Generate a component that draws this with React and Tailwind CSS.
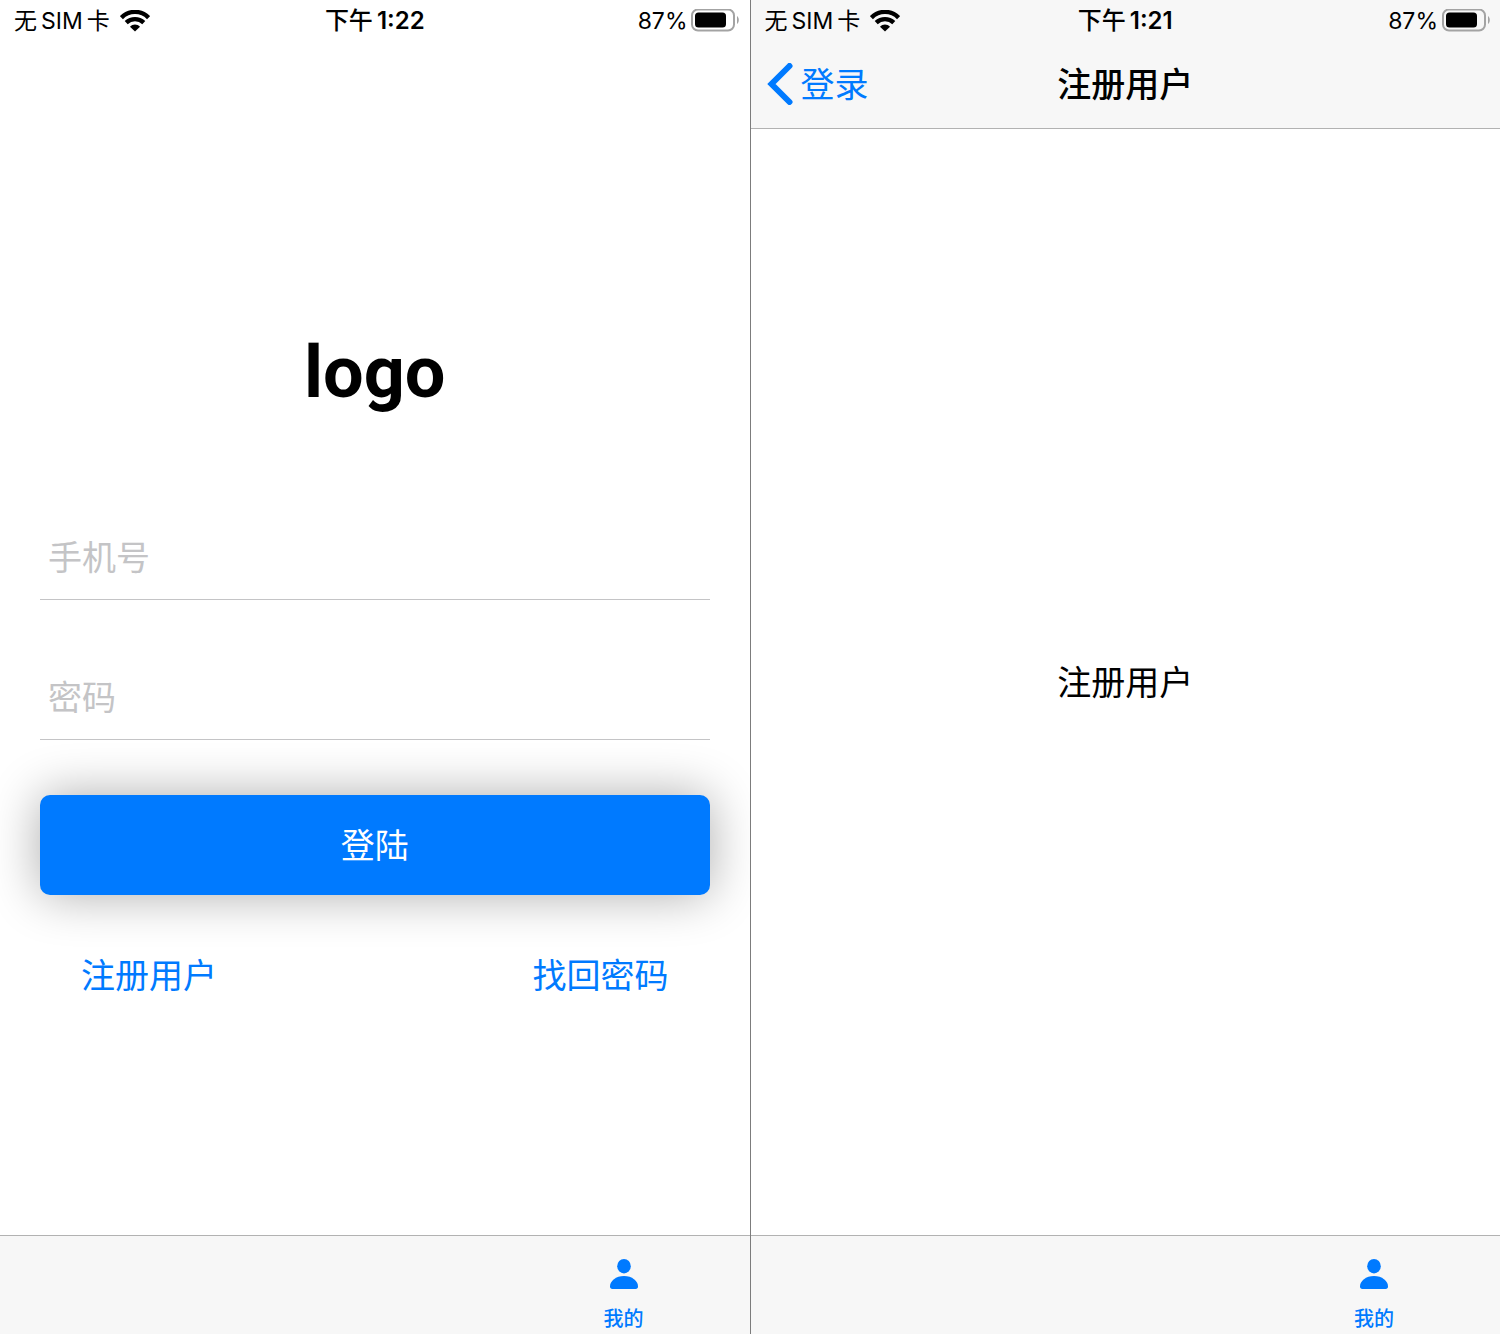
import React from "react";

const cjk = "font-['Inter','Noto_Sans_CJK_SC',sans-serif]";

function WifiIcon() {
  return (
    <svg viewBox="0 0 30 22" className="h-[22px] w-[30px]" fill="none" stroke="currentColor" aria-hidden="true">
      <path d="M1.4 7.6C9 0 21 0 28.6 7.6" strokeWidth="4.4" />
      <path d="M6.2 12.6C11.2 7.9 18.8 7.9 23.8 12.6" strokeWidth="4.4" />
      <path d="M10 16.8C12.8 13.8 17.2 13.8 20 16.8L15 21.6Z" fill="currentColor" stroke="none" />
    </svg>
  );
}

function BatteryIcon() {
  return (
    <svg viewBox="0 0 48 24" className="h-6 w-12" aria-hidden="true">
      <rect x="1" y="0.5" width="42" height="21" rx="6" fill="none" stroke="#a3a3a3" strokeWidth="2" />
      <rect x="4" y="3.5" width="31" height="15" rx="3.5" fill="currentColor" />
      <path d="M46 7C48.4 8.5 48.4 13.5 46 15Z" fill="#a3a3a3" />
    </svg>
  );
}

function StatusBar({ time }) {
  return (
    <div className="grid h-10 grid-cols-3 items-center pt-0.5 text-2xl text-black">
      <div className="flex items-center gap-2.5 pl-3.5 text-[23px] whitespace-nowrap">
        <span className="flex items-center gap-1">
          <span>无</span>
          <span>SIM</span>
          <span>卡</span>
        </span>
        <WifiIcon />
      </div>
      <div className="flex items-center justify-center gap-1 font-semibold whitespace-nowrap">
        <span className="font-medium">下午</span>
        <span>{time}</span>
      </div>
      <div className="flex items-center justify-end gap-1 pr-2.5 whitespace-nowrap">
        <span className="text-[23px]">87%</span>
        <BatteryIcon />
      </div>
    </div>
  );
}

function TabBar() {
  return (
    <nav className="grid h-[99px] shrink-0 grid-cols-3 border-t border-[#b2b2b2] bg-[#f7f7f7]">
      <a href="#me" className="col-start-3 flex flex-col items-center gap-[15px] pt-[22px] pr-0.5 text-[#007aff]">
        <svg viewBox="0 0 30 32" className="h-8 w-[30px]" fill="currentColor" aria-hidden="true">
          <ellipse cx="15" cy="8.2" rx="6.8" ry="7.2" />
          <path d="M1 28.2C1 23 7 18 15 18S29 23 29 28.2C29 30 28.2 31 26.6 31H3.4C1.8 31 1 30 1 28.2Z" />
        </svg>
        <span className="text-xl font-medium">我的</span>
      </a>
    </nav>
  );
}

function Field({ label, type }) {
  return (
    <div className="border-b border-[#c4c4c6]">
      <input
        type={type}
        aria-label={label}
        placeholder={label}
        className="block h-[84px] w-full bg-transparent px-2 text-[34px] text-black outline-none placeholder:text-[#c4c4c6]"
      />
    </div>
  );
}

function LoginScreen() {
  return (
    <section className="flex min-w-0 flex-1 flex-col bg-white">
      <StatusBar time="1:22" />
      <form className="flex flex-1 flex-col px-10 pt-[289px]" onSubmit={(e) => e.preventDefault()}>
        <h1 className="text-center font-['Roboto',sans-serif] text-[72px] leading-[88px] font-bold text-black">logo</h1>
        <div className="mt-[98px] flex flex-col gap-[55px]">
          <Field label="手机号" type="tel" />
          <Field label="密码" type="password" />
          <button
            type="submit"
            className="h-[100px] w-full rounded-[10px] bg-[#007aff] text-[34px] text-white shadow-[0_0_50px_rgba(0,0,0,0.33)]"
          >
            登陆
          </button>
        </div>
        <div className="mt-14 flex justify-between px-[41px] text-[34px] leading-[50px] text-[#007aff]">
          <a href="#register">注册用户</a>
          <a href="#recover">找回密码</a>
        </div>
      </form>
      <TabBar />
    </section>
  );
}

function RegisterScreen() {
  return (
    <section className="flex min-w-0 flex-1 flex-col border-l border-[#7c7c7c] bg-white">
      <header className="border-b border-[#b2b2b2] bg-[#f7f7f7]">
        <StatusBar time="1:21" />
        <div className="grid h-[88px] grid-cols-3 items-center text-[34px]">
          <a href="#login" className="flex items-center gap-2 pl-4 text-[#007aff]">
            <svg viewBox="0 0 26 42" className="h-[42px] w-[26px]" fill="none" stroke="currentColor" strokeWidth="6" strokeLinecap="round" strokeLinejoin="miter" aria-hidden="true">
              <path d="M22.5 3L4.5 21L22.5 39" />
            </svg>
            <span>登录</span>
          </a>
          <h2 className="text-center font-medium text-black">注册用户</h2>
        </div>
      </header>
      <main className="flex flex-1 items-center justify-center text-[34px] text-black">
        <p>注册用户</p>
      </main>
      <TabBar />
    </section>
  );
}

export default function App() {
  return (
    <div className={`flex min-h-screen overflow-hidden ${cjk}`} lang="zh-CN">
      <LoginScreen />
      <RegisterScreen />
    </div>
  );
}
